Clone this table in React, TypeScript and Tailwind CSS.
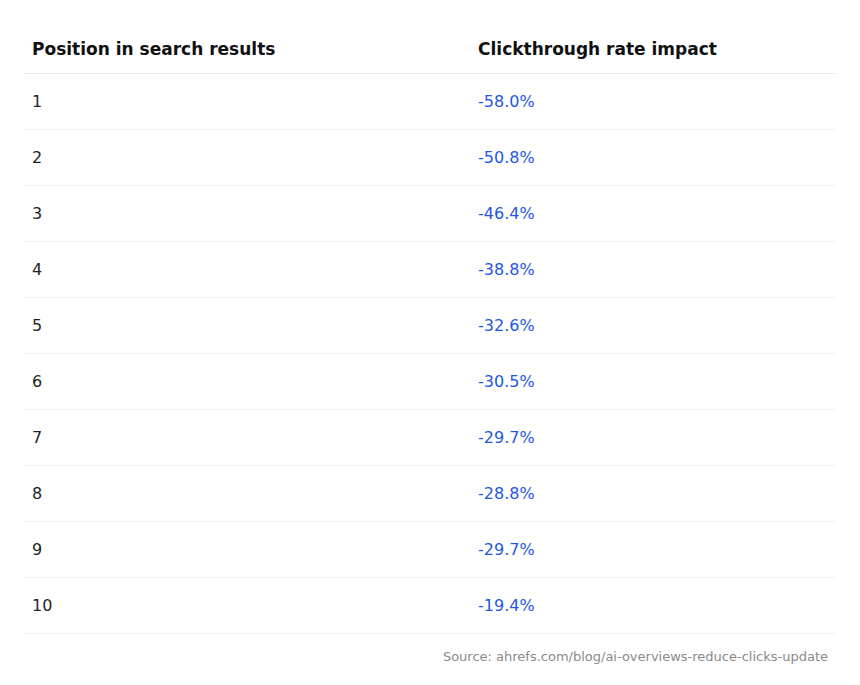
const rows: [string, string][] = [
  ["1", "-58.0%"],
  ["2", "-50.8%"],
  ["3", "-46.4%"],
  ["4", "-38.8%"],
  ["5", "-32.6%"],
  ["6", "-30.5%"],
  ["7", "-29.7%"],
  ["8", "-28.8%"],
  ["9", "-29.7%"],
  ["10", "-19.4%"],
];

export default function App() {
  return (
    <div
      className="min-h-[685px] bg-white px-6 pt-6 text-[#1a1a1a]"
      style={{ fontFamily: '"DejaVu Sans", sans-serif' }}
    >
      <div className="grid grid-cols-[446px_1fr] h-[50px] pt-[2px] items-center border-b border-[#ececec] text-[17px] font-bold text-[#111]">
        <div className="px-2">Position in search results</div>
        <div className="px-2">Clickthrough rate impact</div>
      </div>
      {rows.map(([pos, ctr]) => (
        <div
          key={pos}
          className="grid grid-cols-[446px_1fr] h-14 items-center border-b border-[#f0f0f0] text-base"
        >
          <div className="px-2 text-[#1f1f1f]">{pos}</div>
          <div className="px-2 text-[#1f58e0]">{ctr}</div>
        </div>
      ))}
      <div className="mt-[13px] px-2 text-right text-[13px] leading-5 text-[#8a8a8a]">
        Source: ahrefs.com/blog/ai-overviews-reduce-clicks-update
      </div>
    </div>
  );
}
